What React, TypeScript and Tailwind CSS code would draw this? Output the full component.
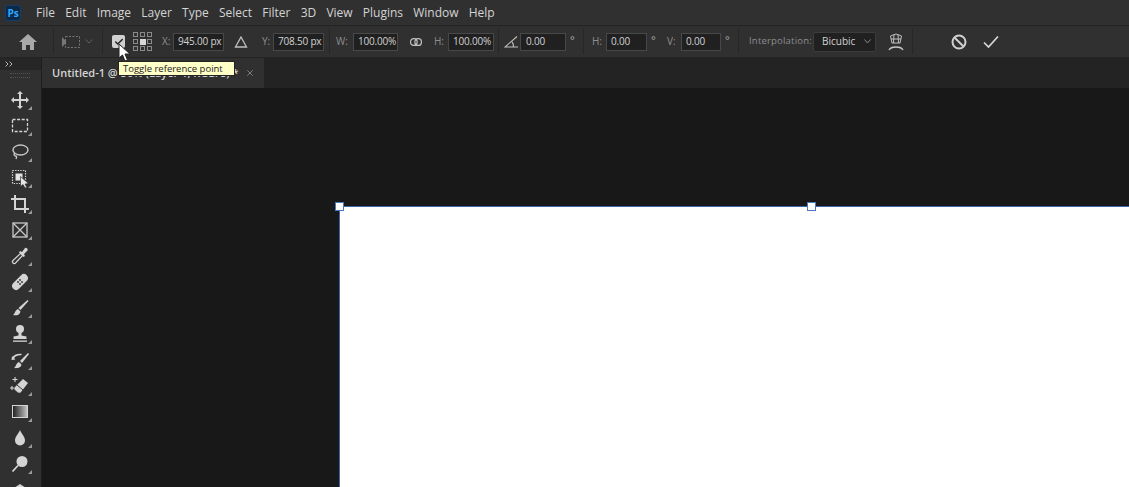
import React from "react";
import { X, Check } from "lucide-react";

const menus = ["File", "Edit", "Image", "Layer", "Type", "Select", "Filter", "3D", "View", "Plugins", "Window", "Help"];

const Sep = ({ className = "" }: { className?: string }) => (
  <div className={`h-[25px] w-px bg-[#262626] shrink-0 ${className}`} />
);

const Field = ({ value, className = "" }: { value: string; className?: string }) => (
  <div className={`h-[18px] flex items-center pl-[4px] border border-[#484848] bg-[#202020] text-[10px] tracking-[-0.2px] text-[#d2d2d2] whitespace-nowrap shrink-0 ${className}`}>
    {value}
  </div>
);

const Label = ({ text, className = "" }: { text: string; className?: string }) => (
  <span className={`text-[10px] text-[#8e8e8e] shrink-0 ${className}`}>{text}</span>
);

const Deg = ({ className = "" }: { className?: string }) => (
  <span className={`text-[11px] leading-none text-[#a8a8a8] -mt-[4px] shrink-0 ${className}`}>°</span>
);

const toolPaths: React.ReactNode[] = [
  // move
  <path key="m" d="M10 1l3 3h-2v5h5V7l3 3-3 3v-2h-5v5h2l-3 3-3-3h2v-5H4v2l-3-3 3-3v2h5V4H7z" fill="#d4d4d4" />,
  // marquee
  <rect key="r" x="2.500" y="3.500" width="15" height="12" fill="none" stroke="#d4d4d4" strokeWidth="1.300" strokeDasharray="3 1.600" />,
  // lasso
  <g key="l" fill="none" stroke="#c8c8c8" strokeWidth="1.400">
    <ellipse cx="10.500" cy="8" rx="7.500" ry="5" />
    <path d="M4.500 11c-1 2 0 3 1 3s1.500 1 .5 3" />
  </g>,
  // object select
  <g key="o">
    <rect x="2.500" y="2.500" width="13" height="13" fill="none" stroke="#d4d4d4" strokeWidth="1.200" strokeDasharray="1.400 1.200" />
    <rect x="5.500" y="5.500" width="7" height="7" fill="#e4e4e4" />
    <path d="M10.500 8.500l8 7-3.500.5 2 3.500-2 .5-2-3.500-2.500 2z" fill="#e4e4e4" stroke="#222" strokeWidth=".6" />
  </g>,
  // crop
  <path key="c" d="M5 1v14h14M1 5h14v14" fill="none" stroke="#d4d4d4" strokeWidth="2" />,
  // frame
  <g key="f" fill="none" stroke="#c8c8c8" strokeWidth="1.300">
    <rect x="3" y="3" width="14" height="14" />
    <path d="M3 3l14 14M17 3L3 17" />
  </g>,
  // eyedropper
  <g key="e">
    <path d="M3 17c-1-1-.5-2 0-2.500L11 7l2 2-7.500 8c-.5.5-1.500 1-2.500 0z" fill="none" stroke="#d4d4d4" strokeWidth="1.200" />
    <path d="M10 5l2 1 3-4c1-1 3.500 1 2.500 2.500L14 8l1 2-1.500 1L9 6.500z" fill="#d4d4d4" />
  </g>,
  // healing
  <g key="h">
    <rect x="6" y="0.500" width="8" height="19" rx="4" transform="rotate(45 10 10)" fill="#d4d4d4" />
    <g fill="#333"><circle cx="10" cy="8" r=".9" /><circle cx="12" cy="10" r=".9" /><circle cx="8" cy="10" r=".9" /><circle cx="10" cy="12" r=".9" /></g>
  </g>,
  // brush
  <g key="b" fill="#d4d4d4">
    <path d="M17.500 2l1 1-8 9-2-2z" />
    <path d="M8 11l2.500 2.500C10 17 6 18 3 17c2-1 2-5 5-6z" />
  </g>,
  // stamp
  <g key="s" fill="#d4d4d4">
    <circle cx="10" cy="5" r="4" />
    <path d="M8.500 8h3v3.500l5 1V15h-13v-2.500l5-1z" />
    <rect x="3" y="16.500" width="14" height="1.300" />
  </g>,
  // history brush
  <g key="hb" fill="#d4d4d4">
    <path d="M18 3l1 1-7 9-2-2z" />
    <path d="M9 12l2.500 2.500C11 18 7 18.500 4 18c2-1 2-5 5-6z" />
    <path d="M2 7c3-3 7-4 10-3l-1 1.300C8 5 6 6 4 8l1.500 1.500-4 .5.500-4z" />
  </g>,
  // eraser
  <g key="er">
    <path d="M13 3l5 4-7 9c-1 1-2 1-3 .5l-3-2.500c-1-1-1-2 0-3z" fill="#d4d4d4" />
    <path d="M7 9l6 5" stroke="#333" strokeWidth="1" />
    <path d="M5 1v5M2.500 3.500h5M2 10v4M0 12h4" stroke="#d4d4d4" strokeWidth="1.100" />
  </g>,
  // gradient
  <g key="g">
    <defs>
      <linearGradient id="gr" x1="0" x2="1"><stop offset="0" stopColor="#1c1c1c" /><stop offset="1" stopColor="#c8c8c8" /></linearGradient>
    </defs>
    <rect x="2.500" y="3.500" width="15" height="12" fill="url(#gr)" stroke="#d4d4d4" />
  </g>,
  // blur
  <path key="d" d="M10 2c1.500 4 5 6.500 5 10.500a5 5 0 0 1-10 0C5 8.500 8.500 6 10 2z" fill="#d4d4d4" />,
  // smudge
  <g key="sm">
    <circle cx="12" cy="7.500" r="5.500" fill="#d4d4d4" />
    <path d="M8 11.500l-5.500 6" stroke="#d4d4d4" strokeWidth="1.800" />
  </g>,
  // dodge
  <path key="do" d="M10 4l9 6-9 6-9-6z" fill="#d4d4d4" />,
];

const Toolbar = () => (
  <div className="w-[41px] shrink-0 bg-[#303030] flex flex-col overflow-hidden">
    <div className="h-[12px] bg-[#262626] flex items-center pl-[5px] shrink-0">
      <svg width="8" height="6" viewBox="0 0 8 6"><path d="M.5.500L3 3 .5 5.500M4.500.500L7 3 4.500 5.500" fill="none" stroke="#b4b4b4" /></svg>
    </div>
    <div className="mx-[10px] mt-[3px] h-[5px] border-y border-dotted border-[#555] mb-[9px] w-[20px] shrink-0" />
    <div className="flex flex-col">
      {toolPaths.map((icon, i) => (
        <div key={i} className="relative h-[26px] shrink-0 flex items-center justify-center pr-[1px]">
          <svg width="20" height="20" viewBox="0 0 20 20">{icon}</svg>
          <span className="absolute right-[9px] bottom-[3px] w-0 h-0 border-l-[4px] border-l-transparent border-b-[4px] border-b-[#9a9a9a]" />
        </div>
      ))}
    </div>
  </div>
);

const OptionsBar = () => (
  <div className="h-[33px] bg-[#303030] border-y border-[#232323] flex items-center shrink-0">
    <div className="w-[53px] flex justify-center shrink-0 pl-[3px]">
      <svg width="18" height="16" viewBox="0 0 18 16"><path d="M9 0L0 8h3v8h4v-5h4v5h4V8h3z" fill="#a8a8a8" /></svg>
    </div>
    <Sep />
    <div className="w-[48px] flex items-center shrink-0 pl-[7px]">
      <svg width="20" height="14" viewBox="0 0 20 14">
        <path d="M1 2l4 4v2l-4 4z" fill="#777" />
        <rect x="4.500" y="1.500" width="14" height="11" fill="none" stroke="#777" strokeDasharray="2 1.500" />
      </svg>
      <svg width="8" height="5" viewBox="0 0 8 5" className="ml-[4px]"><path d="M.5.500L4 4 7.500.500" fill="none" stroke="#5e5e5e" /></svg>
    </div>
    <Sep />
    <div className="w-[13px] h-[13px] ml-[9px] bg-[#d0d0d0] rounded-[2px] flex items-center justify-center shrink-0">
      <Check size={10} strokeWidth={3.5} color="#222" />
    </div>
    <svg width="20" height="20" viewBox="0 0 20 20" className="ml-[8px] shrink-0">
      <g fill="none" stroke="#8a8a8a" strokeWidth="1">
        {[1, 8, 15].flatMap((x) => [1, 8, 15].map((y) =>
          x === 8 && y === 8 ? <rect key={`${x}${y}`} x={7} y={7} width={6} height={6} fill="#d8d8d8" stroke="none" /> : <rect key={`${x}${y}`} x={x - 0.5} y={y - 0.5} width={4} height={4} />
        ))}
      </g>
    </svg>
    <Label text="X:" className="ml-[9px] w-[11px]" />
    <Field value="945.00 px" className="w-[51px]" />
    <svg width="14" height="12" viewBox="0 0 14 12" className="ml-[10px] shrink-0"><path d="M7 1l5.500 10h-11z" fill="none" stroke="#c0c0c0" strokeWidth="1.300" /></svg>
    <Label text="Y:" className="ml-[14px] w-[11px]" />
    <Field value="708.50 px" className="w-[51px]" />
    <Sep className="ml-[5px]" />
    <Label text="W:" className="ml-[6px] w-[17px]" />
    <Field value="100.00%" className="w-[45px]" />
    <svg width="12" height="8" viewBox="0 0 12 8" className="ml-[12px] shrink-0">
      <rect x=".6" y=".6" width="6.500" height="6.800" rx="3" fill="none" stroke="#c0c0c0" strokeWidth="1.200" />
      <rect x="4.900" y=".6" width="6.500" height="6.800" rx="3" fill="none" stroke="#c0c0c0" strokeWidth="1.200" />
    </svg>
    <Label text="H:" className="ml-[12px] w-[14px]" />
    <Field value="100.00%" className="w-[46px]" />
    <Sep className="ml-[4px]" />
    <svg width="14" height="12" viewBox="0 0 14 12" className="ml-[5px] shrink-0"><path d="M13 .5L1 11h13M8 6c1 1 1.500 3 1.500 5" fill="none" stroke="#c0c0c0" strokeWidth="1.100" /></svg>
    <Field value="0.00" className="w-[46px] ml-[2px] pl-[5px]" />
    <Deg className="ml-[4px] w-[6px]" />
    <Sep className="ml-[7px]" />
    <Label text="H:" className="ml-[8px] w-[14px]" />
    <Field value="0.00" className="w-[41px]" />
    <Deg className="ml-[4px] w-[6px]" />
    <Label text="V:" className="ml-[10px] w-[14px]" />
    <Field value="0.00" className="w-[40px]" />
    <Deg className="ml-[4px] w-[6px]" />
    <Sep className="ml-[7px]" />
    <span className="ml-[10px] w-[64px] text-[9.5px] tracking-[0.2px] text-[#8e8e8e] shrink-0">Interpolation:</span>
    <div className="w-[63px] h-[20px] bg-[#202020] border border-[#3c3c3c] rounded-[2px] flex items-center pl-[8px] text-[10px] text-[#d2d2d2] shrink-0">
      <span className="flex-1">Bicubic</span>
      <svg width="7" height="5" viewBox="0 0 7 5" className="mr-[4px]"><path d="M.5.500L3.500 4 6.500.500" fill="none" stroke="#888" /></svg>
    </div>
    <svg width="16" height="18" viewBox="0 0 16 18" className="ml-[12px] shrink-0">
      <path d="M2.500 3L8 1l5.500 2-1.500 7H4zM3 6h10M6 1.500l-.5 8.500M10 1.500l.5 8.500" fill="none" stroke="#c0c0c0" />
      <path d="M1 17c2-4 12-4 14 0" fill="none" stroke="#c8c8c8" strokeWidth="1.300" />
    </svg>
    <Sep className="ml-[8px]" />
    <svg width="16" height="16" viewBox="0 0 16 16" className="ml-[38px] shrink-0">
      <circle cx="8" cy="8" r="6.500" fill="none" stroke="#d0d0d0" strokeWidth="2" />
      <path d="M3.500 3.500l9 9" stroke="#d0d0d0" strokeWidth="2" />
    </svg>
    <svg width="16" height="14" viewBox="0 0 16 14" className="ml-[16px] shrink-0"><path d="M1 7.500L5.500 12 15 1.500" fill="none" stroke="#d8d8d8" strokeWidth="1.700" /></svg>
  </div>
);

export default function App() {
  return (
    <div className="relative w-[1129px] h-[487px] overflow-hidden bg-[#181818] flex flex-col font-['Open_Sans','Noto_Sans',sans-serif]">
      {/* Menu bar */}
      <div className="h-[25px] bg-[#303030] flex items-center shrink-0">
        <div className="w-[16px] h-[16px] ml-[5px] rounded-[3px] bg-[#0b2a4a] border border-[#123f6e] flex items-center justify-center text-[10px] font-bold text-[#31a8ff] leading-none">
          Ps
        </div>
        <div className="flex ml-[15px] gap-[10.200px] text-[12px] text-[#d4d4d4]">
          {menus.map((m) => (
            <span key={m}>{m}</span>
          ))}
        </div>
      </div>

      <OptionsBar />

      <div className="flex flex-1 min-h-0">
        <Toolbar />
        <div className="flex-1 flex flex-col min-w-0 border-l border-[#1e1e1e]">
          <div className="h-[30px] bg-[#232323] flex shrink-0">
            <div className="w-[222px] bg-[#303030] flex items-center pl-[10px] text-[11px] font-semibold text-[#d4d4d4] whitespace-nowrap">
              <span className="w-[193px] overflow-hidden">Untitled-1 @ 50% (Layer 1, RGB/8) *</span>
              <X size={10} color="#8a8a8a" />
            </div>
          </div>
          {/* Document area */}
          <div className="flex-1 pl-[297px] pt-[118px] bg-[#181818] min-h-0">
            <div className="relative w-[900px] h-[400px] bg-white border-l border-t border-[#3f64a8]">
              <span className="absolute -left-[5px] -top-[5px] w-[9px] h-[9px] bg-white border border-[#4a78c0]" />
              <span className="absolute left-[467px] -top-[5px] w-[9px] h-[9px] bg-white border border-[#4a78c0]" />
            </div>
          </div>
        </div>
      </div>

      {/* Tooltip */}
      <div className="absolute left-[118px] top-[61px] h-[15px] w-[117px] bg-[#ffffc8] border border-[#222] text-[9.5px] leading-[13px] pl-[4px] text-[#222] whitespace-nowrap">
        Toggle reference point
      </div>
      {/* Cursor */}
      <svg width="13" height="19" viewBox="0 0 13 19" className="absolute left-[118px] top-[43px]">
        <path d="M1 1v14l3.500-3 2.500 6 2.500-1-2.500-6h5z" fill="#fff" stroke="#222" strokeWidth="1" />
      </svg>
    </div>
  );
}
